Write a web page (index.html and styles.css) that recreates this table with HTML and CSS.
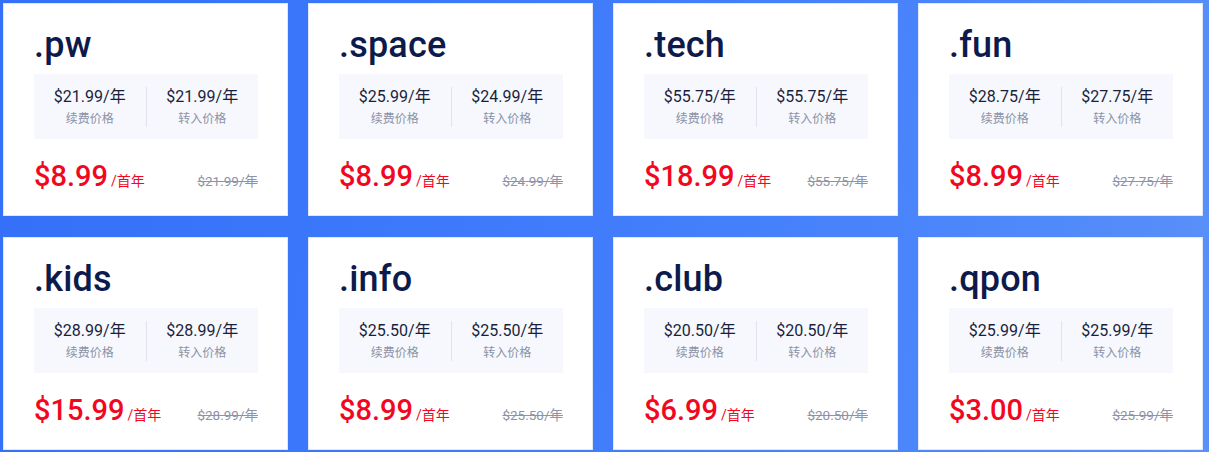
FILE: index.html
```html
<!DOCTYPE html>
<html lang="zh-CN">
<head>
<meta charset="utf-8">
<title>域名价格</title>
<link rel="stylesheet" href="styles.css">
</head>
<body>
<div class="page">
  <div class="grid">
    <div class="card">
      <div class="name">.pw</div>
      <div class="box">
        <div class="col"><div class="p">$21.99/年</div><div class="l">续费价格</div></div>
        <div class="col sep"><div class="p">$21.99/年</div><div class="l">转入价格</div></div>
      </div>
      <div class="foot"><div class="now">$8.99<span class="unit">/首年</span></div><div class="old">$21.99/年</div></div>
    </div>
    <div class="card">
      <div class="name">.space</div>
      <div class="box">
        <div class="col"><div class="p">$25.99/年</div><div class="l">续费价格</div></div>
        <div class="col sep"><div class="p">$24.99/年</div><div class="l">转入价格</div></div>
      </div>
      <div class="foot"><div class="now">$8.99<span class="unit">/首年</span></div><div class="old">$24.99/年</div></div>
    </div>
    <div class="card">
      <div class="name">.tech</div>
      <div class="box">
        <div class="col"><div class="p">$55.75/年</div><div class="l">续费价格</div></div>
        <div class="col sep"><div class="p">$55.75/年</div><div class="l">转入价格</div></div>
      </div>
      <div class="foot"><div class="now">$18.99<span class="unit">/首年</span></div><div class="old">$55.75/年</div></div>
    </div>
    <div class="card">
      <div class="name">.fun</div>
      <div class="box">
        <div class="col"><div class="p">$28.75/年</div><div class="l">续费价格</div></div>
        <div class="col sep"><div class="p">$27.75/年</div><div class="l">转入价格</div></div>
      </div>
      <div class="foot"><div class="now">$8.99<span class="unit">/首年</span></div><div class="old">$27.75/年</div></div>
    </div>
    <div class="card">
      <div class="name">.kids</div>
      <div class="box">
        <div class="col"><div class="p">$28.99/年</div><div class="l">续费价格</div></div>
        <div class="col sep"><div class="p">$28.99/年</div><div class="l">转入价格</div></div>
      </div>
      <div class="foot"><div class="now">$15.99<span class="unit">/首年</span></div><div class="old">$28.99/年</div></div>
    </div>
    <div class="card">
      <div class="name">.info</div>
      <div class="box">
        <div class="col"><div class="p">$25.50/年</div><div class="l">续费价格</div></div>
        <div class="col sep"><div class="p">$25.50/年</div><div class="l">转入价格</div></div>
      </div>
      <div class="foot"><div class="now">$8.99<span class="unit">/首年</span></div><div class="old">$25.50/年</div></div>
    </div>
    <div class="card">
      <div class="name">.club</div>
      <div class="box">
        <div class="col"><div class="p">$20.50/年</div><div class="l">续费价格</div></div>
        <div class="col sep"><div class="p">$20.50/年</div><div class="l">转入价格</div></div>
      </div>
      <div class="foot"><div class="now">$6.99<span class="unit">/首年</span></div><div class="old">$20.50/年</div></div>
    </div>
    <div class="card">
      <div class="name">.qpon</div>
      <div class="box">
        <div class="col"><div class="p">$25.99/年</div><div class="l">续费价格</div></div>
        <div class="col sep"><div class="p">$25.99/年</div><div class="l">转入价格</div></div>
      </div>
      <div class="foot"><div class="now">$3.00<span class="unit">/首年</span></div><div class="old">$25.99/年</div></div>
    </div>
  </div>
</div>
</body>
</html>
```

FILE: styles.css
```css
html, body {
  margin: 0;
  padding: 0;
}
body {
  width: 1209px;
  height: 452px;
  overflow: hidden;
  background: linear-gradient(100deg, #3470f8 0%, #3f7bfb 45%, #4a85fb 75%, #5a90f8 100%);
  font-family: Roboto, "Noto Sans CJK SC", sans-serif;
}
.page {
  padding: 3px 6px 0 3px;
}
.grid {
  display: grid;
  grid-template-columns: repeat(4, 285px);
  column-gap: 20px;
  row-gap: 21px;
}
.card {
  box-sizing: border-box;
  height: 213px;
  background: #fff;
  border: 1px solid #e1e7f4;
  padding: 21px 29px 0 30px;
}
.name {
  font-family: Roboto, sans-serif;
  font-weight: 500;
  font-size: 36px;
  line-height: 40px;
  color: #0d1a4c;
  letter-spacing: 0.2px;
}
.box {
  margin-top: 9px;
  height: 65px;
  background: #f6f8fd;
  display: flex;
  align-items: center;
}
.col {
  flex: 1;
  text-align: center;
}
.sep {
  border-left: 1px solid #dfe3ec;
}
.p {
  font-size: 16px;
  line-height: 20px;
  color: #1a1f3c;
}
.l {
  margin-top: 4px;
  font-size: 12px;
  line-height: 16px;
  color: #8c92a6;
}
.foot {
  margin-top: 19px;
  display: flex;
  align-items: baseline;
  justify-content: space-between;
}
.now {
  font-family: Roboto, sans-serif;
  font-weight: 500;
  font-size: 29px;
  line-height: 36px;
  color: #f2071f;
}
.unit {
  font-family: Roboto, "Noto Sans CJK SC", sans-serif;
  font-weight: 400;
  font-size: 14px;
  margin-left: 3px;
}
.old {
  font-size: 13.5px;
  color: #8d93a8;
  text-decoration: line-through;
}
```
